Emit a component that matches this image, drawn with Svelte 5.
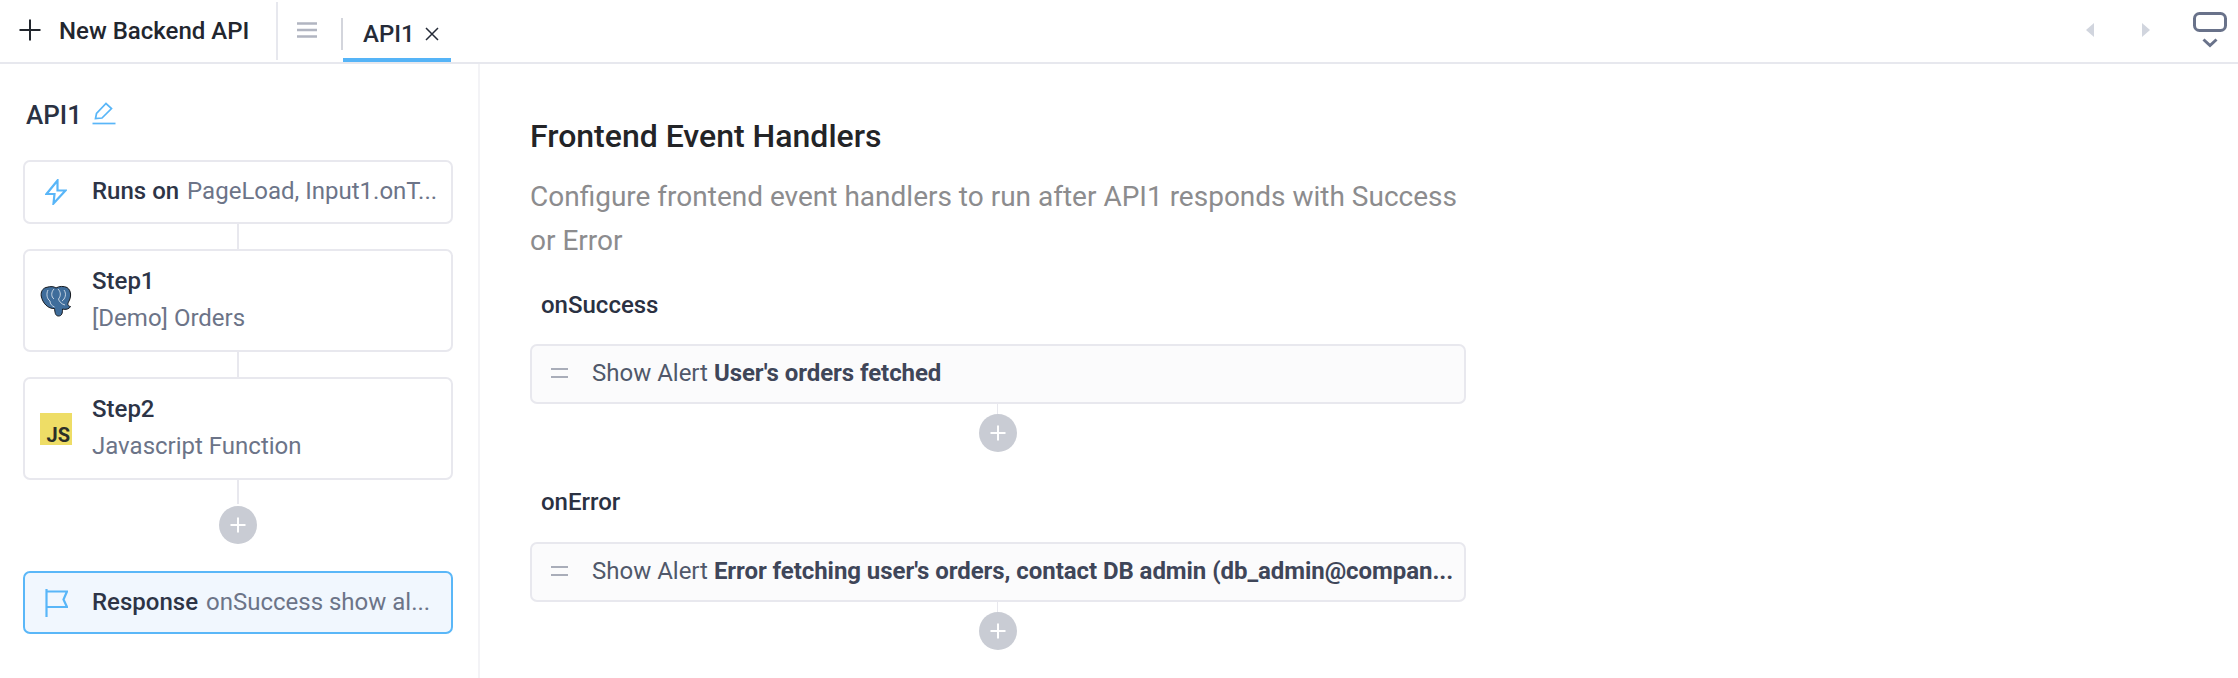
<script>
  const handlers = [
    { name: 'onSuccess', msg: "User's orders fetched" },
    { name: 'onError', msg: "Error fetching user's orders, contact DB admin (db_admin@compan..." }
  ];
</script>

<div class="page">
  <header class="topbar">
    <button class="new-api">
      <svg class="plus-icon" viewBox="0 0 22 22"><path d="M11 0.500v21M0.500 11h21" /></svg>
      <span>New Backend API</span>
    </button>
    <span class="menu">
      <svg viewBox="0 0 20 16"><path d="M0 1.500h20M0 8h20M0 14.500h20" /></svg>
    </span>
    <span class="tab-sep"></span>
    <div class="tab">
      <span>API1</span>
      <svg viewBox="0 0 14 14"><path d="M1 1l12 12M13 1L1 13" /></svg>
    </div>
    <div class="top-right">
      <svg class="arrow" viewBox="0 0 8 14"><path d="M8 0v14L0 7z" /></svg>
      <svg class="arrow" viewBox="0 0 8 14"><path d="M0 0v14l8-7z" /></svg>
      <svg class="panel-toggle" viewBox="0 0 34 36">
        <rect x="1.500" y="1.500" width="31" height="17" rx="5" />
        <path d="M10.500 27.500l6.500 6 6.500-6" />
      </svg>
    </div>
  </header>

  <div class="body">
    <aside class="sidebar">
      <div class="title">
        <span>API1</span>
        <svg viewBox="0 0 24 24">
          <path d="M3.500 17.500L4.500 12.500L14 2.500L19.500 7.500L10 17z" />
          <path d="M0.500 22.500h23" />
        </svg>
      </div>

      <div class="card row">
        <svg class="ico" viewBox="0 0 22 26"><path d="M12.500 1.500L1.500 15h8l-1 9.500L20.500 11.500h-8z" /></svg>
        <div class="oneline"><b>Runs on</b><span>PageLoad, Input1.onT...</span></div>
      </div>
      <div class="link"></div>
      <div class="card step">
        <svg class="logo" viewBox="0 0 32 32">
          <path class="pg-in" d="M6 2.500C11 1 14 1.500 16 3C19 1 24 1 27 2.500C31.500 5.500 31.500 12 28.500 17C27.500 19 27.500 21 30.500 21.500C29.500 24 25.500 25 22.500 24C22.500 28 22 31 18.500 31C15 31 15 27 14.500 23.500C8 24 2.500 18 1.200 11C0.700 7 2.500 3.500 6 2.500z" />
          <path class="pg-line" d="M8 5C6 9 7 14 10 16C10 19 12 21 14.500 22M14 4C11 7 11 12 14 14M18 4C21 7 21 11 18.500 14C19 16 21 19 25 20M24 5C27 9 25 14 22 16" />
        </svg>
        <div class="stack"><b>Step1</b><span>[Demo] Orders</span></div>
      </div>
      <div class="link"></div>
      <div class="card step">
        <div class="js"><span>JS</span></div>
        <div class="stack"><b>Step2</b><span>Javascript Function</span></div>
      </div>
      <div class="link short"></div>
      <div class="add"><svg viewBox="0 0 16 16"><path d="M8 0.500v15M0.500 8h15" /></svg></div>

      <div class="card row active">
        <svg class="ico" viewBox="0 0 23 28"><path d="M1.500 0v28M1.500 2.500h20.500l-3.500 8 3.500 7.500H1.500" /></svg>
        <div class="oneline"><b>Response</b><span>onSuccess show al...</span></div>
      </div>
    </aside>

    <main class="content">
      <h1>Frontend Event Handlers</h1>
      <p>Configure frontend event handlers to run after API1 responds with Success or Error</p>
      {#each handlers as h}
        <section class="handler">
          <h2>{h.name}</h2>
          <div class="action">
            <svg viewBox="0 0 17 10"><path d="M0 1h17M0 9h17" /></svg>
            <div class="action-text">Show Alert <b>{h.msg}</b></div>
          </div>
          <div class="link tiny"></div>
          <div class="add small"><svg viewBox="0 0 16 16"><path d="M8 0.500v15M0.500 8h15" /></svg></div>
        </section>
      {/each}
    </main>
  </div>
</div>

<style>
  :global(body) {
    margin: 0;
    background: #fff;
  }
  .page {
    width: 2238px;
    height: 678px;
    overflow: hidden;
    font-family: Roboto, "Noto Sans", sans-serif;
    color: #2a3142;
  }
  .topbar {
    height: 62px;
    display: flex;
    align-items: stretch;
    border-bottom: 2px solid #e7e8ee;
  }
  .new-api {
    width: 278px;
    height: 58px;
    margin-top: 2px;
    display: flex;
    align-items: center;
    gap: 18px;
    padding: 0 0 3px 19px;
    border: none;
    border-right: 2px solid #e7e8ee;
    background: none;
    box-sizing: border-box;
    font: 500 24px Roboto, sans-serif;
    color: #22262e;
  }
  .new-api span {
    padding-top: 3px;
  }
  .plus-icon {
    width: 22px;
    height: 22px;
    flex: none;
    fill: none;
    stroke: #22262e;
    stroke-width: 2;
  }
  .menu {
    width: 20px;
    margin-left: 19px;
    display: flex;
    align-items: center;
    padding-bottom: 2px;
  }
  .menu svg {
    width: 20px;
    height: 16px;
    fill: none;
    stroke: #b1b5c1;
    stroke-width: 2.500;
  }
  .tab-sep {
    width: 2px;
    height: 32px;
    margin: 18px 0 0 24px;
    background: #d3d5dc;
  }
  .tab {
    width: 108px;
    height: 62px;
    display: flex;
    align-items: center;
    gap: 10px;
    padding: 9px 0 0 20px;
    box-sizing: border-box;
    border-bottom: 4px solid #55b4f7;
    font-size: 24px;
    font-weight: 500;
    color: #252b38;
    line-height: 1;
  }
  .tab svg {
    width: 14px;
    height: 14px;
    fill: none;
    stroke: #252b38;
    stroke-width: 1.500;
  }
  .top-right {
    margin-left: auto;
    display: flex;
    align-items: flex-start;
  }
  .arrow {
    width: 8px;
    height: 14px;
    margin-top: 23px;
    fill: #d1d5de;
    margin-right: 48px;
  }
  .panel-toggle {
    width: 34px;
    height: 36px;
    margin: 12px 11px 0 -5px;
    fill: none;
    stroke: #69728a;
    stroke-width: 3;
  }
  .body {
    display: flex;
    height: 614px;
  }
  .sidebar {
    width: 480px;
    box-sizing: border-box;
    padding: 0 25px 0 23px;
    border-right: 2px solid #f3f3f6;
    flex: none;
  }
  .title {
    display: flex;
    align-items: center;
    gap: 10px;
    height: 96px;
    padding: 6px 0 0 3px;
    box-sizing: border-box;
    font-size: 26px;
    font-weight: 500;
    color: #2a3142;
  }
  .title svg {
    width: 24px;
    height: 24px;
    margin-top: -5px;
    fill: none;
    stroke: #59b6f8;
    stroke-width: 1.700;
  }
  .card {
    box-sizing: border-box;
    width: 430px;
    border: 2px solid #e8e8ee;
    border-radius: 7px;
    display: flex;
    align-items: center;
    background: #fff;
  }
  .row {
    height: 64px;
    padding-left: 20px;
  }
  .row .ico {
    width: 22px;
    height: 26px;
    flex: none;
    margin-right: 25px;
    fill: none;
    stroke: #59b6f8;
    stroke-width: 2.200;
  }
  .oneline {
    display: flex;
    gap: 8px;
    align-items: baseline;
    font-size: 24px;
    margin-top: -2px;
    white-space: nowrap;
  }
  .oneline b, .stack b {
    font-weight: 500;
    color: #2d3446;
  }
  .oneline span, .stack span {
    color: #6c7488;
    font-size: 24px;
  }
  .step {
    height: 103px;
    padding-left: 15px;
  }
  .logo, .js {
    width: 32px;
    height: 32px;
    flex: none;
    margin-right: 20px;
  }
  .pg-in {
    fill: #3f6d9b;
    stroke: #15181d;
    stroke-width: 1;
  }
  .pg-line {
    fill: none;
    stroke: #fff;
    stroke-width: 0.700;
  }
  .js {
    background: #eedd66;
    display: flex;
    align-items: flex-end;
    justify-content: flex-end;
    padding: 0 2px 0 0;
    box-sizing: border-box;
    font-size: 20px;
    font-weight: 700;
    line-height: 1;
    color: #2b2f28;
  }
  .stack {
    display: flex;
    flex-direction: column;
    gap: 10px;
    font-size: 24px;
    line-height: 27px;
    margin-top: -2px;
  }
  .link {
    width: 2px;
    height: 25px;
    margin-left: 214px;
    background: #e8e8ee;
  }
  .link.short {
    height: 24px;
  }
  .add {
    width: 38px;
    height: 38px;
    margin: 2px 0 27px 196px;
    border-radius: 50%;
    background: #c9ccd4;
    display: flex;
    align-items: center;
    justify-content: center;
  }
  .add svg {
    width: 16px;
    height: 16px;
    fill: none;
    stroke: #fff;
    stroke-width: 2;
  }
  .active {
    height: 63px;
    background: #f1f7fe;
    border-color: #5ab7f8;
  }
  .active .ico {
    height: 28px;
    width: 23px;
    margin-right: 24px;
  }
  .content {
    padding-left: 50px;
    width: 936px;
    flex: none;
    box-sizing: content-box;
  }
  h1 {
    margin: 0;
    padding-top: 55px;
    font-size: 32px;
    line-height: 34px;
    font-weight: 500;
    color: #232427;
  }
  p {
    margin: 22px 0 0;
    font-size: 28px;
    line-height: 44px;
    color: #8c8c8e;
  }
  h2 {
    margin: 0;
    padding-left: 11px;
    font-size: 24px;
    line-height: 28px;
    font-weight: 500;
    color: #2a3142;
  }
  .handler {
    margin-top: 28px;
  }
  .handler + .handler {
    margin-top: 36px;
  }
  .handler + .handler .action {
    margin-top: 26px;
  }
  .action {
    margin-top: 25px;
    height: 60px;
    box-sizing: border-box;
    border: 2px solid #e8e8ee;
    border-radius: 7px;
    background: #fbfbfc;
    display: flex;
    align-items: center;
    padding: 0 0 2px 19px;
    font-size: 24px;
  }
  .action svg {
    width: 17px;
    height: 10px;
    flex: none;
    margin-right: 24px;
    fill: none;
    stroke: #a9adb9;
    stroke-width: 2;
  }
  .action-text {
    color: #50586a;
    white-space: nowrap;
  }
  .action-text b {
    font-weight: 700;
    color: #3f4659;
    letter-spacing: -0.060px;
  }
  .link.tiny {
    height: 10px;
    width: 1px;
    margin-left: 467px;
  }
  .add.small {
    margin: 0 0 0 449px;
  }
</style>
